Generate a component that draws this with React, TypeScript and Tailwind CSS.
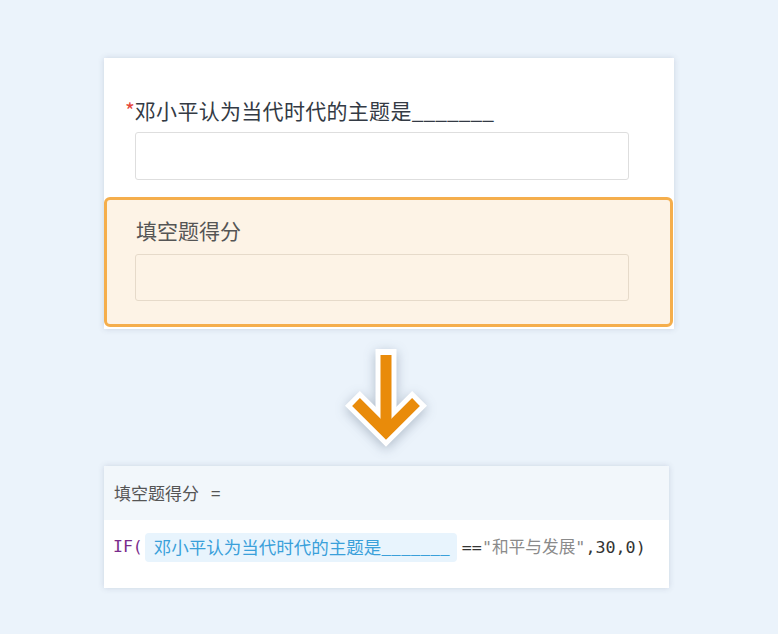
import React from "react";

const cjk = { fontFamily: '"Noto Sans CJK SC", "Noto Sans", sans-serif' };
const mono = { fontFamily: '"DejaVu Sans Mono", "Noto Sans CJK SC", monospace' };

function Arrow() {
  return (
    <svg
      width="90"
      height="110"
      viewBox="0 0 90 110"
      className="overflow-visible drop-shadow-[0_3px_6px_rgba(40,60,90,0.3)]"
    >
      <g fill="none" strokeLinejoin="miter" strokeLinecap="butt" strokeMiterlimit="10">
        <path d="M45 5 V88" stroke="#ffffff" strokeWidth="21" />
        <path d="M11.4 54.4 L45 88 L78.6 54.4" stroke="#ffffff" strokeWidth="21" />
        <path d="M45 11 V88" stroke="#E98B0A" strokeWidth="11" />
        <path d="M15 58 L45 88 L75 58" stroke="#E98B0A" strokeWidth="11" />
      </g>
    </svg>
  );
}

export default function App() {
  return (
    <div className="w-[778px] h-[634px] bg-[#EBF3FB] overflow-hidden" style={cjk}>
      <div className="pl-[104px] pt-[58px] flex flex-col">
        {/* Top form card */}
        <div className="w-[570px] h-[271px] bg-white shadow-[0_0_6px_rgba(60,80,110,0.18)] pt-[38px] flex flex-col">
          <div className="h-[28px] pl-[21px] flex items-center text-[21px] leading-[28px] text-[#333a44]">
            <span className="text-[#E5463A]">*</span>
            <span className="tracking-[0.3px]">邓小平认为当代时代的主题是</span>
            <span>_______</span>
          </div>
          <div className="mt-[8px] ml-[31px] w-[494px] h-[48px] border border-[#dedede] rounded-[3px] bg-white" />
          <div className="mt-[17px] mr-px h-[130px] border-[3px] border-[#F5AE4C] rounded-[6px] bg-[#FDF3E6] pt-[16px] flex flex-col">
            <div className="h-[28px] pl-[29px] text-[21px] leading-[28px] text-[#555555]">填空题得分</div>
            <div className="mt-[10px] ml-[28px] w-[494px] h-[47px] border border-[#E6DACA] rounded-[3px]" />
          </div>
        </div>

        {/* Arrow */}
        <div className="mt-[15px] h-[110px] ml-[237px]">
          <Arrow />
        </div>

        {/* Formula card */}
        <div className="mt-[12px] w-[565px] h-[122px] bg-white shadow-[0_0_6px_rgba(60,80,110,0.18)] flex flex-col">
          <div className="h-[54px] bg-[#F2F7FB] flex items-center pl-[10px] text-[17px] text-[#555555]">
            <span>填空题得分</span>
            <span className="ml-[12px]">=</span>
          </div>
          <div className="pt-[13px] pl-[9px] flex items-center h-[42px]">
            <span className="text-[16.5px] text-[#7A2C8C]" style={mono}>IF(</span>
            <span className="ml-[2px] h-[29px] flex items-center bg-[#E8F4FD] rounded-[4px] pl-[9px] pr-[7px] text-[17.5px] text-[#3AA0DA]">
              邓小平认为当代时代的主题是_______
            </span>
            <span className="ml-[5px] text-[16.7px]" style={mono}>
              <span className="text-[#333333]">==</span>
              <span className="text-[#8a8a8a]">"和平与发展"</span>
              <span className="text-[#333333]">,30,0)</span>
            </span>
          </div>
        </div>
      </div>
    </div>
  );
}
